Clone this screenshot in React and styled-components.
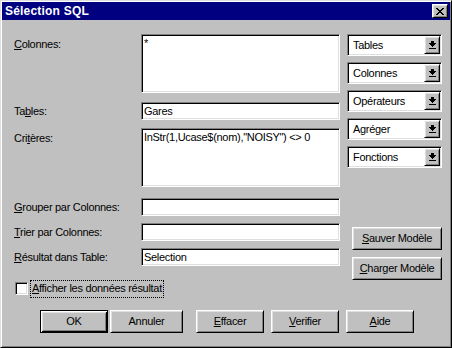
import React from "react";
import styled, { createGlobalStyle } from "styled-components";

const Global = createGlobalStyle`
  html, body { margin: 0; padding: 0; background: #c0c0c0; }
`;

const Window = styled.div`
  width: 452px;
  height: 348px;
  box-sizing: border-box;
  background: #c0c0c0;
  border: 1px solid;
  border-color: #dfdfdf #000 #000 #dfdfdf;
  box-shadow: inset 1px 1px #fff, inset -1px -1px #808080;
  padding: 1px;
  display: flex;
  flex-direction: column;
  font-family: "Liberation Sans", Arial, sans-serif;
  font-size: 11px;
  line-height: 13px;
  letter-spacing: -0.3px;
  color: #000;
`;

const TitleBar = styled.div`
  height: 18px;
  background: #000080;
  display: flex;
  align-items: center;
  justify-content: space-between;
  padding: 0 2px 0 3px;
`;

const Title = styled.span`
  color: #fff;
  font-weight: bold;
  font-size: 12px;
  letter-spacing: 0.2px;
`;

const raised = `
  border: 1px solid;
  border-color: #fff #000 #000 #fff;
  box-shadow: inset 1px 1px #dfdfdf, inset -1px -1px #808080;
  background: #c0c0c0;
`;

const sunken = `
  border: 1px solid;
  border-color: #808080 #fff #fff #808080;
  box-shadow: inset 1px 1px #000, inset -1px -1px #dfdfdf;
  background: #fff;
`;

const CloseBtn = styled.div`
  ${raised}
  box-sizing: border-box;
  width: 16px;
  height: 14px;
  display: flex;
  align-items: center;
  justify-content: center;
`;

const Body = styled.div`
  display: flex;
  flex-direction: column;
  padding: 14px 0 0 12px;
`;

const TopRow = styled.div`
  display: flex;
  align-items: flex-start;
`;

const Form = styled.div`
  display: flex;
  flex-direction: column;
  width: 326px;
`;

const Row = styled.div`
  display: grid;
  grid-template-columns: 127px 199px;
  align-items: ${(p) => (p.$multi ? "start" : "center")};
  margin-top: ${(p) => p.$mt || 0}px;
`;

const Label = styled.label`
  padding-top: ${(p) => (p.$multi ? 4 : 0)}px;
  white-space: nowrap;
`;

const U = styled.span`
  text-decoration: underline;
  text-underline-offset: 1px;
`;

const Field = styled.div`
  ${sunken}
  box-sizing: border-box;
  height: ${(p) => p.$h}px;
  padding: ${(p) => (p.$multi ? "2px 2px" : "0 2px")};
  display: flex;
  align-items: ${(p) => (p.$multi ? "flex-start" : "center")};
  white-space: pre;
  overflow: hidden;
`;

const RightCol = styled.div`
  display: flex;
  flex-direction: column;
  margin-left: 7px;
  width: 95px;
`;

const Combos = styled.div`
  display: flex;
  flex-direction: column;
  gap: 6px;
`;

const Combo = styled.div`
  ${sunken}
  box-sizing: border-box;
  height: 22px;
  display: flex;
  align-items: stretch;
  padding: 1px;
`;

const ComboText = styled.span`
  flex: 1;
  padding-left: 4px;
  display: flex;
  align-items: center;
`;

const ComboBtn = styled.span`
  ${raised}
  box-sizing: border-box;
  width: 16px;
  display: flex;
  align-items: center;
  justify-content: center;
`;

const Button = styled.div`
  ${raised}
  box-sizing: border-box;
  width: ${(p) => p.$w || 68}px;
  height: 23px;
  display: flex;
  align-items: center;
  justify-content: center;
  margin-left: ${(p) => p.$ml || 0}px;
  margin-top: ${(p) => p.$mt || 0}px;
  align-self: ${(p) => (p.$end ? "flex-end" : "auto")};
  ${(p) =>
    p.$default &&
    `
    border: 1px solid #000;
    box-shadow: inset 1px 1px #fff, inset -1px -1px #000, inset 2px 2px #dfdfdf, inset -2px -2px #808080;
  `}
`;

const CheckRow = styled.div`
  display: flex;
  align-items: center;
  height: 17px;
  margin-left: 1px;
`;

const CheckBox = styled.span`
  ${sunken}
  box-sizing: border-box;
  width: 13px;
  height: 13px;
`;

const CheckLabel = styled.span`
  margin-left: 3px;
  outline: 1px dotted #000;
  padding: 1px 1px 2px 1px;
`;

const ButtonRow = styled.div`
  display: flex;
  margin-top: 13px;
`;

const ArrowIcon = () => (
  <svg width="7" height="9" viewBox="0 0 7 9" shapeRendering="crispEdges">
    <rect x="2" y="0" width="3" height="2" fill="#000" />
    <rect x="0" y="2" width="7" height="1" fill="#000" />
    <rect x="1" y="3" width="5" height="1" fill="#000" />
    <rect x="2" y="4" width="3" height="1" fill="#000" />
    <rect x="3" y="5" width="1" height="1" fill="#000" />
    <rect x="0" y="7" width="7" height="1" fill="#000" />
  </svg>
);

const CloseIcon = () => (
  <svg width="8" height="7" viewBox="0 0 8 7" shapeRendering="crispEdges">
    <rect x="0" y="0" width="2" height="1" fill="#000" />
    <rect x="6" y="0" width="2" height="1" fill="#000" />
    <rect x="1" y="1" width="2" height="1" fill="#000" />
    <rect x="5" y="1" width="2" height="1" fill="#000" />
    <rect x="2" y="2" width="4" height="1" fill="#000" />
    <rect x="3" y="3" width="2" height="1" fill="#000" />
    <rect x="2" y="4" width="4" height="1" fill="#000" />
    <rect x="1" y="5" width="2" height="1" fill="#000" />
    <rect x="5" y="5" width="2" height="1" fill="#000" />
    <rect x="0" y="6" width="2" height="1" fill="#000" />
    <rect x="6" y="6" width="2" height="1" fill="#000" />
  </svg>
);

const combos = ["Tables", "Colonnes", "Opérateurs", "Agréger", "Fonctions"];

export default function App() {
  return (
    <>
      <Global />
      <Window>
        <TitleBar>
          <Title>Sélection SQL</Title>
          <CloseBtn>
            <CloseIcon />
          </CloseBtn>
        </TitleBar>
        <Body>
          <TopRow>
            <Form>
              <Row $multi>
                <Label $multi>
                  <U>C</U>olonnes:
                </Label>
                <Field $multi $h={59}>*</Field>
              </Row>
              <Row $mt={9}>
                <Label>
                  Ta<U>b</U>les:
                </Label>
                <Field $h={18}>Gares</Field>
              </Row>
              <Row $multi $mt={8}>
                <Label $multi>
                  Cri<U>t</U>ères:
                </Label>
                <Field $multi $h={59}>{'InStr(1,Ucase$(nom),"NOISY") <> 0'}</Field>
              </Row>
              <Row $mt={11}>
                <Label>
                  <U>G</U>rouper par Colonnes:
                </Label>
                <Field $h={18} />
              </Row>
              <Row $mt={7}>
                <Label>
                  <U>T</U>rier par Colonnes:
                </Label>
                <Field $h={18} />
              </Row>
              <Row $mt={7}>
                <Label>
                  <U>R</U>ésultat dans Table:
                </Label>
                <Field $h={18}>Selection</Field>
              </Row>
            </Form>
            <RightCol>
              <Combos>
                {combos.map((c) => (
                  <Combo key={c}>
                    <ComboText>{c}</ComboText>
                    <ComboBtn>
                      <ArrowIcon />
                    </ComboBtn>
                  </Combo>
                ))}
              </Combos>
              <Button $w={90} $end $mt={59}>
                <span>
                  <U>S</U>auver Modèle
                </span>
              </Button>
              <Button $w={90} $end $mt={7}>
                <span>
                  <U>C</U>harger Modèle
                </span>
              </Button>
            </RightCol>
          </TopRow>
          <CheckRow>
            <CheckBox />
            <CheckLabel>
              <U>A</U>fficher les données résultat
            </CheckLabel>
          </CheckRow>
          <ButtonRow>
            <Button $default $ml={26}>OK</Button>
            <Button $w={73} $ml={2}>Annuler</Button>
            <Button $ml={13}>
              <span>
                <U>E</U>ffacer
              </span>
            </Button>
            <Button $ml={7}>
              <span>
                <U>V</U>erifier
              </span>
            </Button>
            <Button $ml={7}>
              <span>
                <U>A</U>ide
              </span>
            </Button>
          </ButtonRow>
        </Body>
      </Window>
    </>
  );
}
